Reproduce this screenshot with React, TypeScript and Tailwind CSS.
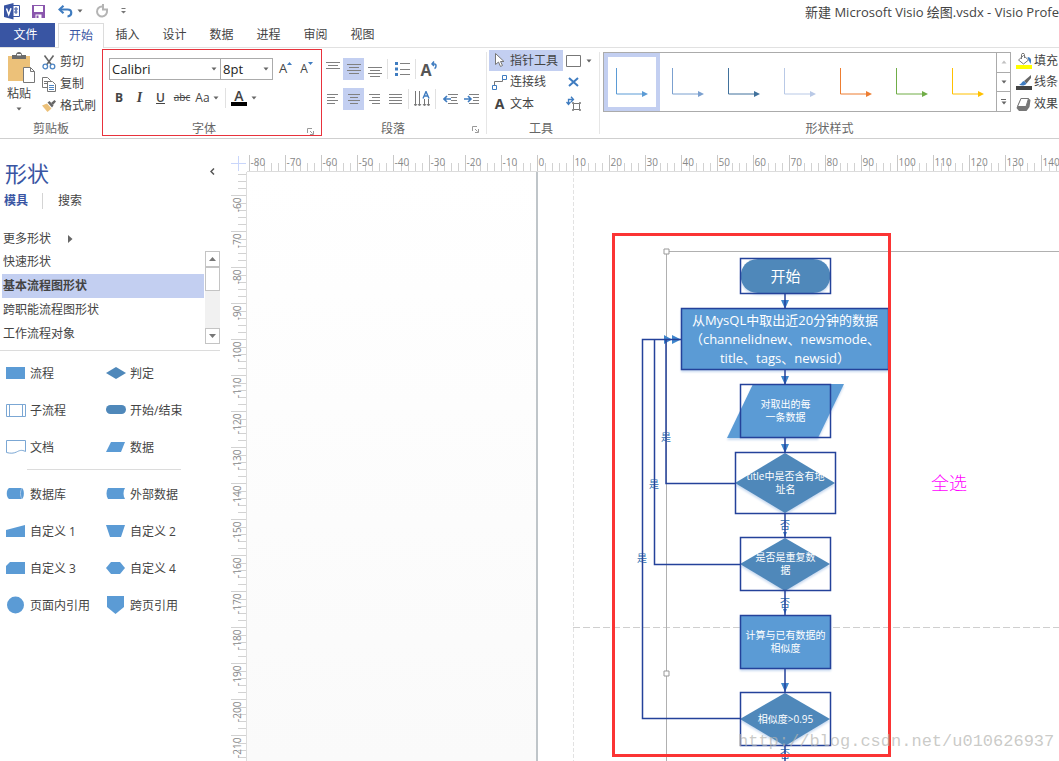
import type { ReactNode } from "react";

const FONT = "font-['Open_Sans','Noto_Sans_CJK_SC',sans-serif]";

// ─── Small shared pieces ─────────────────────────────────────────────────────
function Caret({ className = "" }: { className?: string }) {
  return (
    <svg width="6" height="4" viewBox="0 0 6 4" className={`shrink-0 ${className}`} fill="#666" aria-hidden>
      <path d="M0.5 0.5h5L3 3.5z" />
    </svg>
  );
}

function Sep() {
  return <span className="w-px h-5 bg-[#e1e1e1] shrink-0" />;
}

function IconButton({
  label,
  active,
  wide,
  children,
}: {
  label: string;
  active?: boolean;
  wide?: string;
  children: ReactNode;
}) {
  return (
    <button
      type="button"
      aria-label={label}
      className={`h-[22px] ${wide ?? "w-[21px]"} shrink-0 flex items-center justify-center ${active ? "bg-[#c3cff1]" : ""}`}
    >
      {children}
    </button>
  );
}

function Lines({ rows, y = 0 }: { rows: [number, number][]; y?: number }) {
  return (
    <svg width="14" height="22" fill="none" stroke="#808080" aria-hidden>
      {rows.map(([x1, x2], i) => (
        <path key={i} d={`M${x1} ${y + i * 3 + 0.5}H${x2}`} />
      ))}
    </svg>
  );
}

function Launcher() {
  return (
    <svg width="7" height="7" fill="none" stroke="#999" aria-hidden>
      <path d="M.5 5V.5H5M3 3l2.5 2.5M6.5 3v3.5H3" />
    </svg>
  );
}

// ─── Title bar ───────────────────────────────────────────────────────────────
function TitleBar() {
  return (
    <header className="h-[23px] flex items-center">
      <div className="flex items-center pl-1 pb-px">
        <svg width="17" height="17" aria-label="Visio" role="img">
          <path d="M8 2.5h7.5v11H8" fill="#fff" stroke="#3955a3" />
          <path d="M11 5h2v2h-2zM12 7v4M10 9h3.5" fill="none" stroke="#3955a3" />
          <path d="M0 2.5 9.500 0v16.500L0 14z" fill="#3955a3" />
          <path d="m2.500 5.500 2.200 6 2.300-6.300" fill="none" stroke="#fff" strokeWidth="1.500" />
        </svg>
        <button type="button" aria-label="保存" className="ml-[11px]">
          <svg width="13" height="13" className="block">
            <path d="M0 0h13v13H0z" fill="#8a56ad" />
            <path d="M2 1h9v6H2zM3.500 9.500h6V13h-6z" fill="#fff" />
            <path d="M4.500 10.500h2V13h-2z" fill="#8a56ad" />
          </svg>
        </button>
        <button type="button" aria-label="撤消" className="ml-[13px] flex items-center gap-1">
          <svg width="15" height="13" fill="none" stroke="#3f7cc0" strokeWidth="2.200">
            <path d="M2 4.500h7.500c5 0 5 6.500 0 7" />
            <path d="M5.500 0.800 1.500 4.500l4 3.700" />
          </svg>
          <Caret />
        </button>
        <button type="button" aria-label="重复" className="ml-3">
          <svg width="14" height="14" fill="none" stroke="#b4b4b4" strokeWidth="2" className="block">
            <path d="M7 2.500A5 5 0 1 0 12 7V5" />
            <path d="M8 0v5.500h5" />
          </svg>
        </button>
        <button type="button" aria-label="自定义快速访问工具栏" className="ml-[12px]">
          <svg width="5" height="6" fill="#777">
            <path d="M0.500 0h4v1h-4zM0 3h5L2.500 5.500z" />
          </svg>
        </button>
      </div>
      <div className="ml-auto text-[13px] leading-5 text-[#444] whitespace-nowrap">
        新建 Microsoft Visio 绘图.vsdx - Visio Profe
      </div>
    </header>
  );
}

const TABS = ["插入", "设计", "数据", "进程", "审阅", "视图"];

function TabBar() {
  return (
    <nav className="h-[25px] flex border-b border-[#e1e1e1] text-xs text-[#444]">
      <button type="button" className="w-[51px] box-content pr-1 bg-[#3955a3] text-white">文件</button>
      <button
        type="button"
        className="w-[46px] ml-[3px] -mb-px bg-white border border-b-0 border-[#dcdcdc] text-[#3955a3]"
      >
        开始
      </button>
      {TABS.map((t) => (
        <button key={t} type="button" className="w-[47px]">{t}</button>
      ))}
    </nav>
  );
}

// ─── Ribbon ──────────────────────────────────────────────────────────────────
function GroupLabel({ children, launcher }: { children: ReactNode; launcher?: boolean }) {
  return (
    <div className="mt-auto h-4 flex items-center text-xs leading-4 text-[#666]">
      <span className="flex-1 text-center">{children}</span>
      {launcher && <span className="w-[22px] pl-2"><Launcher /></span>}
    </div>
  );
}

function GroupEdge() {
  return <div className="w-px my-1 shrink-0 bg-[#e6e6e6]" />;
}

function Clipboard() {
  return (
    <section className="w-[102px] flex flex-col pb-px">
      <div className="flex pt-[3px]">
        <button type="button" className="w-[38px] mr-1 flex flex-col items-center text-xs text-[#444]">
          <svg width="28" height="33" className="mt-px ml-[6px]" aria-hidden>
            <path d="M0 4h22v25H0z" fill="#ecc179" />
            <path d="M4 7V3h4c0-4 6-4 6 0h4v4z" fill="#6b6b6b" />
            <path d="M9 3.500h4V2H9z" fill="#fff" />
            <path d="M15.500 15.500h7l4 4v11h-11z" fill="#fff" stroke="#777" />
            <path d="M22.500 15.500v4h4" fill="none" stroke="#777" />
          </svg>
          <span className="leading-4 mt-px">粘贴</span>
          <Caret className="mt-[5px]" />
        </button>
        <div className="text-xs text-[#444]">
          <button type="button" className="h-[22px] flex items-center gap-1">
            <svg width="14" height="15" fill="none" aria-hidden>
              <path d="M2.500 0.500 9.500 10M11.500 0.500 4.500 10" stroke="#666" strokeWidth="1.600" />
              <circle cx="3.300" cy="11.500" r="2.300" stroke="#4e86c4" strokeWidth="1.300" />
              <circle cx="10.500" cy="11.500" r="2.300" stroke="#4e86c4" strokeWidth="1.300" />
            </svg>
            剪切
          </button>
          <button type="button" className="h-[22px] flex items-center gap-1">
            <svg width="14" height="15" fill="#fff" stroke="#777" aria-hidden>
              <path d="M.500.500h5l3 3v7h-8zM2 4.500h4M2 6.500h4" />
              <path d="M5.500 4.500h5l3 3v7h-8z" />
              <path d="M7 8.500h5M7 10.500h5M7 12.500h5" stroke="#4e86c4" />
            </svg>
            复制
          </button>
          <button type="button" className="h-[22px] flex items-center gap-1">
            <svg width="14" height="12" aria-hidden>
              <path d="M0 5.500 5 3.500l4.500 5L5.500 12z" fill="#ecc179" />
              <path d="m5.500 2.500 2-1.500 4 4.500-1.500 2z" fill="#666" />
              <path d="m9 3 3.500-3L14 1.500 11 5z" fill="#666" />
            </svg>
            格式刷
          </button>
        </div>
      </div>
      <GroupLabel>剪贴板</GroupLabel>
    </section>
  );
}

function Combo({ label, value, width }: { label: string; value: string; width: string }) {
  return (
    <label className={`relative block ${width}`} aria-label={label}>
      <select
        aria-label={label}
        className="appearance-none block w-full h-[22px] pl-[2px] border border-[#ababab] bg-white text-[13px] leading-5 text-[#222]"
      >
        <option>{value}</option>
      </select>
      <Caret className="absolute right-1 top-[9px] pointer-events-none" />
    </label>
  );
}

function FontGroup() {
  return (
    <section className="w-[220px] mt-px mb-[2px] border border-[#e8323c] flex flex-col pl-[6px] text-[#444]">
      <div className="flex items-center pt-2">
        <Combo label="字体" value="Calibri" width="w-[112px]" />
        <Combo label="字号" value="8pt" width="w-[53px] -ml-px" />
        <IconButton label="增大字号">
          <span className="text-[13px] pl-1">A</span>
          <svg width="5" height="3" className="mb-3" fill="#3f7cc0"><path d="M0 3h5L2.500 0z" /></svg>
        </IconButton>
        <IconButton label="减小字号">
          <span className="text-xs pl-1">A</span>
          <svg width="5" height="3" className="mb-3" fill="#3f7cc0"><path d="M0 0h5L2.500 3z" /></svg>
        </IconButton>
      </div>
      <div className="flex items-center mt-[7px] text-xs">
        <IconButton label="加粗" wide="w-5"><b>B</b></IconButton>
        <IconButton label="倾斜">
          <i className="font-['Liberation_Serif',serif] text-sm font-bold">I</i>
        </IconButton>
        <IconButton label="下划线"><span className="underline font-semibold">U</span></IconButton>
        <IconButton label="删除线" wide="w-[22px]">
          <span className="line-through text-[10px]">abc</span>
        </IconButton>
        <IconButton label="更改大小写" wide="w-7">
          Aa<Caret className="ml-[3px]" />
        </IconButton>
        <span className="w-1" />
        <Sep />
        <IconButton label="字体颜色" wide="w-9">
          <span className="w-4 h-4 border-b-4 border-black text-sm leading-3 font-semibold">A</span>
          <Caret className="ml-1" />
        </IconButton>
      </div>
      <div className="mt-auto h-3 flex items-center text-xs leading-3 text-[#666]">
        <span className="flex-1 text-center">字体</span>
        <span className="w-[22px] pl-2 pt-1"><Launcher /></span>
      </div>
    </section>
  );
}

function ParagraphGroup() {
  return (
    <section className="w-[164px] flex flex-col pb-px">
      <div className="flex items-center pt-[10px]">
        <IconButton label="顶端对齐"><Lines rows={[[0, 14], [2, 12], [0, 14]]} y={4} /></IconButton>
        <IconButton label="中部对齐" active><Lines rows={[[0, 14], [2, 12], [0, 14], [2, 12]]} y={6} /></IconButton>
        <IconButton label="底端对齐"><Lines rows={[[0, 14], [2, 12], [0, 14], [2, 12]]} y={9} /></IconButton>
        <span className="w-[2px]" />
        <Sep />
        <span className="w-[3px]" />
        <IconButton label="项目符号">
          <svg width="16" height="14" aria-hidden>
            <path d="M1 0h3v3H1zM1 5.500h3v3H1zM1 11h3v3H1z" fill="#3f7cc0" />
            <path d="M6 1.500h10M6 7.500h10M6 12.500h10" stroke="#808080" />
          </svg>
        </IconButton>
        <span className="w-[3px]" />
        <Sep />
        <IconButton label="旋转文本" wide="w-[25px]">
          <span className="text-base leading-4 font-bold text-[#555] pt-[2px]">A</span>
          <svg width="6" height="9" fill="none" stroke="#3f7cc0" strokeWidth="1.500" className="mb-2 -ml-px">
            <path d="M1 3h2.500c2 0 2 3.500 0 4.500M3 .500 1 3l2 2" />
          </svg>
        </IconButton>
      </div>
      <div className="flex items-center mt-2">
        <IconButton label="左对齐"><Lines rows={[[1, 12], [1, 9], [1, 12], [1, 9]]} y={6} /></IconButton>
        <IconButton label="居中" active><Lines rows={[[1, 13], [3, 11], [1, 13], [3, 11]]} y={6} /></IconButton>
        <IconButton label="右对齐"><Lines rows={[[1, 12], [4, 12], [1, 12], [4, 12]]} y={6} /></IconButton>
        <IconButton label="两端对齐"><Lines rows={[[0, 13], [0, 13], [0, 13], [0, 13]]} y={6} /></IconButton>
        <span className="w-[2px]" />
        <Sep />
        <span className="w-[2px]" />
        <IconButton label="文字方向">
          <svg width="16" height="16" fill="none" aria-hidden>
            <path d="M1.500 0v14M5.500 0v14M10.500 8v6M14.500 8v6M0 13l1.500 2L3 13M4 13l1.500 2L7 13M9 13l1.500 2 1.500-2M13 13l1.500 2 1.500-2" stroke="#777" />
            <path d="m9 7.500 3-7 3 7M10 5h4" stroke="#3f7cc0" strokeWidth="1.400" />
          </svg>
        </IconButton>
        <span className="w-[3px]" />
        <Sep />
        <span className="w-1" />
        <IconButton label="减少缩进量">
          <svg width="15" height="10" fill="none" aria-hidden>
            <path d="M5 .500h10M8 3.500h6M8 6.500h6M5 9.500h10" stroke="#808080" />
            <path d="M1 5h7M4 2 1 5l3 3" stroke="#3f7cc0" strokeWidth="1.600" />
          </svg>
        </IconButton>
        <IconButton label="增加缩进量">
          <svg width="15" height="10" fill="none" aria-hidden>
            <path d="M5 .500h10M9 3.500h6M9 6.500h6M5 9.500h10" stroke="#808080" />
            <path d="M0 5h7M4 2l3 3-3 3" stroke="#3f7cc0" strokeWidth="1.600" />
          </svg>
        </IconButton>
      </div>
      <GroupLabel launcher>段落</GroupLabel>
    </section>
  );
}

function ToolGroup() {
  return (
    <section className="w-[112px] flex flex-col pb-px text-xs text-[#444]">
      <div className="flex pt-[2px] pl-[2px]">
        <div className="w-[74px]">
          <button type="button" className="w-full h-[21px] flex items-center bg-[#c3cff1]">
            <svg width="21" height="15" fill="#fff" stroke="#777" aria-hidden>
              <path d="M6.500.500v11l3-2.500 2 4.500 2-1-2-4h3.500z" />
            </svg>
            指针工具
          </button>
          <button type="button" className="h-[22px] flex items-center">
            <svg width="21" height="15" fill="none" aria-hidden>
              <path d="M5.500 10V6.500h8V4" stroke="#777" />
              <path d="M3.500 10.500h4v4h-4zM13.500.500h4v4h-4z" fill="#fff" stroke="#3f7cc0" />
            </svg>
            连接线
          </button>
          <button type="button" className="h-[22px] flex items-center">
            <span className="w-[21px] text-center text-sm font-bold">A</span>
            文本
          </button>
        </div>
        <div className="pl-[3px]">
          <button type="button" aria-label="矩形" className="h-[21px] flex items-center gap-[5px]">
            <svg width="15" height="12" fill="none" stroke="#777"><path d="M.500.500h14v11H.500z" /></svg>
            <Caret />
          </button>
          <button type="button" aria-label="连接点" className="w-[14px] h-[22px] flex items-center justify-center">
            <svg width="11" height="10" stroke="#3f7cc0" strokeWidth="2"><path d="m1 1 9 8M10 1 1 9" /></svg>
          </button>
          <button type="button" aria-label="文本块" className="h-[22px] flex items-center">
            <svg width="16" height="16" fill="none">
              <path d="M7.500 7.500h6v6h-6z" stroke="#777" />
              <path d="M6.500 6.500h1v1h-1zM13.500 6.500h1v1h-1zM6.500 13.500h1v1h-1zM13.500 13.500h1v1h-1z" fill="#fff" stroke="#777" />
              <path d="M2.500 8V3.500H7M5 .800l2.500 2.700L5 6M.500 6l2 2.500L4.500 6" stroke="#3f7cc0" strokeWidth="1.300" />
            </svg>
          </button>
        </div>
      </div>
      <div className="mt-auto h-4 text-xs leading-4 text-center text-[#666] pr-1">工具</div>
    </section>
  );
}

const STYLES = ["#5b9bd5", "#7ba0cf", "#41719c", "#b9c9e6", "#ed7d31", "#70ad47", "#ffc000"];

function StyleGroup() {
  return (
    <section className="flex-1 min-w-0 flex flex-col pb-px text-xs text-[#444]">
      <div className="flex pt-[2px] pl-[3px]">
        <div className="mt-[2px] h-[60px] flex shrink-0 border border-[#ababab]">
          {STYLES.map((c, i) => (
            <button
              key={c}
              type="button"
              aria-label={`形状样式 ${i + 1}`}
              className={`w-14 flex items-center justify-center ${i === 0 ? "border-4 border-[#c3cff1]" : ""}`}
            >
              <svg width="34" height="32" className="shrink-0">
                <path d="M1.500 2v26H29" fill="none" stroke={c} />
                <path d="M27 25v6l6-3z" fill={c} />
              </svg>
            </button>
          ))}
          <div className="w-[14px] flex flex-col border-l border-[#ababab]">
            <button type="button" aria-label="上一行" className="flex-1 flex items-center justify-center opacity-40">
              <Caret className="rotate-180" />
            </button>
            <button type="button" aria-label="下一行" className="flex-1 flex items-center justify-center border-y border-[#ababab]">
              <Caret />
            </button>
            <button type="button" aria-label="其他" className="flex-1 flex flex-col gap-px items-center justify-center">
              <span className="w-[5px] h-px bg-[#666]" />
              <Caret />
            </button>
          </div>
        </div>
        <div className="pl-[5px] shrink-0">
          <button type="button" className="h-[21px] flex items-center gap-[2px]">
            <svg width="16" height="16" aria-hidden>
              <path d="m2.500 7 5-4.500 5 4.500-5 4z" fill="#fff" stroke="#777" />
              <path d="M5.500 6V1.500c0-1.500 3-1.500 3 0V5" fill="none" stroke="#777" />
              <path d="M11.500 4c4 .500 4 3 3 7l-2-4z" fill="#3f7cc0" />
              <path d="M0 12h16v4H0z" fill="#ffff00" />
            </svg>
            填充
          </button>
          <button type="button" className="h-[22px] flex items-center gap-[2px]">
            <svg width="16" height="15" aria-hidden>
              <path d="M15 0 8 6l2.500 2.500L15 3z" fill="#666" />
              <path d="M8 6c-2 0-2 3-5 3.500 2 1.500 6 1.500 7.500-1z" fill="#3f7cc0" />
              <path d="M0 11h16v4H0z" fill="#444" />
            </svg>
            线条
          </button>
          <button type="button" className="h-[22px] flex items-center gap-[2px]">
            <svg width="16" height="13" aria-hidden>
              <path d="M5 0h7l2.500 2-1 7-3 4H3L.500 10z" fill="#777" />
              <path d="M5 .500h7.500L10 8.500H1.500z" fill="#fff" stroke="#777" />
            </svg>
            效果
          </button>
        </div>
      </div>
      <GroupLabel>形状样式</GroupLabel>
    </section>
  );
}

// ─── Shapes pane ─────────────────────────────────────────────────────────────
const STENCILS = ["快速形状", "基本流程图形状", "跨职能流程图形状", "工作流程对象"];

const B = "#5b9bd5";
const D = "#4f88ba";

const BASIC: [string, ReactNode][] = [
  ["流程", <path d="M0 3h19v12H0z" fill={B} />],
  ["判定", <path d="M0 9 10 3l10 6-10 6z" fill={D} />],
  ["子流程", <path d="M.500 3.500h19v12H.500zM3.500 3.500v12M16.500 3.500v12" fill="#fff" stroke="#7ba7d4" />],
  ["开始/结束", <rect x="0" y="4" width="20" height="9" rx="4.500" fill={D} />],
  ["文档", <path d="M.500 2.500h19v11c-4-2-6-1-9 .500s-6 1.500-10 .500z" fill="#fff" stroke="#7ba7d4" />],
  ["数据", <path d="M5 4h14l-4 10H0z" fill={B} />],
];

const EXTRA: [string, ReactNode][] = [
  ["数据库", <><path d="M3 3h13c2.500 2 2.500 9 0 11H3C0 12 0 5 3 3z" fill={B} /><path d="M16 3c-2 3-2 8 0 11" fill="none" stroke="#a9c8e8" /></>],
  ["外部数据", <path d="M2 3h17c-2 3-2 8 0 11H2C0 11 0 6 2 3z" fill={B} />],
  ["自定义 1", <path d="M0 8 19 3v12H0z" fill={B} />],
  ["自定义 2", <path d="M0 3h19l-4 12H4z" fill={B} />],
  ["自定义 3", <path d="M4 3h15v12H0V7z" fill={B} />],
  ["自定义 4", <path d="M5 3h9l5 6-5 6H5L0 9z" fill={B} />],
  ["页面内引用", <circle cx="9.500" cy="9" r="8.500" fill={B} />],
  ["跨页引用", <path d="M1 0h17v11L9.500 18 1 11z" fill={B} />],
];

function ShapeGrid({ items }: { items: [string, ReactNode][] }) {
  return (
    <div className="grid grid-cols-[100px_100px] auto-rows-[37px] pl-[6px]">
      {items.map(([name, shape]) => (
        <button key={name} type="button" className="flex items-center gap-1 whitespace-nowrap">
          <svg width="20" height="19" className="shrink-0" aria-hidden>{shape}</svg>
          {name}
        </button>
      ))}
    </div>
  );
}

function ShapesPane() {
  return (
    <aside className="w-[230px] shrink-0 pr-[10px] text-xs text-[#444]">
      <div className="flex items-center justify-between pt-[19px] pl-[5px] pr-[5px]">
        <h2 className="text-[22px] leading-[30px] text-[#3955a3]">形状</h2>
        <button type="button" aria-label="折叠" className="pb-1">
          <svg width="5" height="7" fill="none" stroke="#555" strokeWidth="1.500"><path d="M4 .500 1 3.500l3 3" /></svg>
        </button>
      </div>
      <div className="flex items-center h-6 pl-1 mt-px">
        <button type="button" className="font-bold text-[#3955a3]">模具</button>
        <span className="w-px h-4 bg-[#d4d4d4] ml-[14px] mr-[15px]" />
        <button type="button">搜索</button>
      </div>
      <button type="button" className="flex items-center h-6 mt-[14px] pl-[3px]">
        更多形状
        <svg width="5" height="8" fill="#666" className="ml-[17px]"><path d="M0 0l4.500 4L0 8z" /></svg>
      </button>
      <div className="flex h-[100px] border-b border-[#dcdcdc]">
        <ul className="flex-1 pl-[2px] -mt-px">
          {STENCILS.map((s, i) => (
            <li key={s}>
              <button
                type="button"
                className={`block w-full h-6 pl-px text-left ${i === 1 ? "bg-[#c3cff1] font-bold" : ""}`}
              >
                {s}
              </button>
            </li>
          ))}
        </ul>
        <div className="w-[15px] h-[93px] ml-px flex flex-col bg-[#f1f1f1]">
          <button type="button" aria-label="向上滚动" className="h-4 bg-white border border-[#c4c4c4] flex items-center justify-center">
            <svg width="7" height="4" fill="#777"><path d="M0 4h7L3.500 0z" /></svg>
          </button>
          <span className="h-6 bg-white border border-[#c4c4c4]" />
          <button type="button" aria-label="向下滚动" className="mt-auto h-4 bg-white border border-[#c4c4c4] flex items-center justify-center">
            <svg width="7" height="4" fill="#777"><path d="M0 0h7L3.500 4z" /></svg>
          </button>
        </div>
      </div>
      <div className="pt-1">
        <ShapeGrid items={BASIC} />
      </div>
      <div className="ml-[27px] w-[154px] h-px bg-[#dcdcdc] mt-[3px] mb-[6px]" />
      <ShapeGrid items={EXTRA} />
    </aside>
  );
}

// ─── Rulers ──────────────────────────────────────────────────────────────────
const MAJOR = 36;
const MINOR = [1, 2, 3, 4];

function TopRuler() {
  return (
    <svg className="w-full h-[17px] block" aria-hidden>
      {Array.from({ length: 23 }, (_, i) => {
        const x = 2.5 + i * MAJOR;
        return (
          <g key={i}>
            <path d={`M${x} 0V17`} stroke="#c8c8c8" />
            {MINOR.map((m) => (
              <path key={m} d={`M${Math.round(x + m * 7.2) + 0.5} 8V17`} stroke="#d2d2d2" />
            ))}
            <text x={x + 1} y="11" fontSize="10" fill="#888">{-80 + i * 10}</text>
          </g>
        );
      })}
      <path d="M0 16.5H4000" stroke="#dcdcdc" />
    </svg>
  );
}

function LeftRuler() {
  return (
    <svg className="w-[17px] h-full block" aria-hidden>
      {Array.from({ length: 17 }, (_, i) => {
        const y = -12.5 + i * MAJOR;
        return (
          <g key={i}>
            <path d={`M1 ${y}H17`} stroke="#d2d2d2" />
            {MINOR.map((m) => (
              <path key={m} d={`M8 ${Math.round(y + m * 7.2) + 0.5}H17`} stroke="#d2d2d2" />
            ))}
            {i > 0 && (
              <text transform={`translate(11 ${y + 2}) rotate(-90)`} textAnchor="end" fontSize="10" fill="#888">
                {-50 - i * 10}
              </text>
            )}
          </g>
        );
      })}
      <path d="M16.5 0V4000" stroke="#dcdcdc" />
    </svg>
  );
}

// ─── Drawing ─────────────────────────────────────────────────────────────────
type Node = {
  id: string;
  box: [number, number, number, number];
  shape: string;
  dark?: boolean;
  lines: string[];
  text: string;
};

const NODES: Node[] = [
  { id: "start", box: [493, 86, 91, 36], shape: "M511 87h55c23 0 23 34 0 34h-55c-23 0-23-34 0-34z", dark: true, lines: ["开始"], text: "text-[15px] leading-5" },
  { id: "fetch", box: [434, 136, 208, 62], shape: "M434 136h208v62H434z", lines: ["从MysQL中取出近20分钟的数据", "（channelidnew、newsmode、", "title、tags、newsid）"], text: "text-[13px] leading-[19px]" },
  { id: "each", box: [493, 212, 91, 54], shape: "M506 212h91l-26 54h-91z", lines: ["对取出的每", "一条数据"], text: "text-[10px] leading-[13px]" },
  { id: "title", box: [488, 280, 101, 62], shape: "M538 281l50 30-50 30-50-30z", dark: true, lines: ["title中是否含有地", "址名"], text: "text-[10px] leading-[13px]" },
  { id: "dup", box: [493, 365, 91, 54], shape: "M538 366l45 26-45 27-45-27z", dark: true, lines: ["是否是重复数", "据"], text: "text-[10px] leading-[13px]" },
  { id: "calc", box: [493, 443, 91, 54], shape: "M493 443h91v54h-91z", lines: ["计算与已有数据的", "相似度"], text: "text-[10px] leading-[13px]" },
  { id: "sim", box: [493, 520, 91, 54], shape: "M538 521l45 26-45 27-45-27z", dark: true, lines: ["相似度>0.95"], text: "text-[10px] leading-[13px]" },
];

const ANSWERS: [string, string, string][] = [
  ["a", "是", "left-[414px] top-[259px]"],
  ["b", "是", "left-[402px] top-[306px]"],
  ["c", "是", "left-[390px] top-[380px]"],
  ["d", "否", "left-[533px] top-[347px]"],
  ["e", "否", "left-[533px] top-[425px]"],
  ["f", "否", "left-[533px] top-[576px]"],
];

function Drawing() {
  return (
    <div className="relative overflow-hidden bg-linear-to-b from-white to-[#fafafa]">
      <div className="absolute left-[289px] top-0 right-0 bottom-0 bg-white border-l-2 border-[#bfc5c9]" />
      <svg className="absolute inset-0 w-full h-full" fill="none" aria-hidden>
        <path d="M326.500 0V4000" stroke="#e2e2e2" strokeDasharray="4 2" />
        <path d="M326 455.500H4000" stroke="#cfcfcf" strokeDasharray="7 3" />
        <g style={{ filter: "drop-shadow(0 2px 1px #c9daf0)" }}>
          {NODES.map((n) => (
            <path key={n.id} d={n.shape} fill={n.dark ? D : B} />
          ))}
        </g>
      </svg>

      {ANSWERS.map(([id, t, pos]) => (
        <span key={id} className={`absolute ${pos} text-[10px] leading-[13px] text-[#2f6fb2]`}>{t}</span>
      ))}
      {NODES.map((n) => (
        <div
          key={n.id}
          className={`absolute flex flex-col items-center justify-center whitespace-nowrap text-white ${n.text}`}
          style={{ left: n.box[0], top: n.box[1], width: n.box[2], height: n.box[3] }}
        >
          {n.lines.map((l) => (
            <span key={l}>{l}</span>
          ))}
        </div>
      ))}

      <svg className="absolute inset-0 w-full h-full" fill="none" aria-hidden>
        {/* selection bounds */}
        <path d="M419.500 4000V79.500H4000" stroke="#b0b0b0" />
        <path d="M417 77h5v5h-5zM417 499h5v5h-5z" fill="#fff" stroke="#999" />
        {/* arrow heads */}
        <path
          d="M534 128h8l-4 9zM534 204h8l-4 9zM534 272h8l-4 9zM536 360h4l-2 5zM536 437h4l-2 5zM534 511h8l-4 9zM417 163v9l8-4.500zM425 163v9l9-4.500z"
          fill="#3f86cc"
        />
        {/* connectors */}
        <path
          d="M538 122v14M538 198v14M538 266v14M538 342v23M538 419v24M538 497v23M538 574v60M488 311.500H419V167.500M493 392.500H407.500V167.500M493 546.500H395.500V167.500H434"
          stroke="#24429a"
          strokeWidth="1.500"
        />
        {NODES.map((n) => (
          <rect
            key={n.id}
            x={n.box[0] + 0.5}
            y={n.box[1] + 0.5}
            width={n.box[2] - 1}
            height={n.box[3] - 1}
            stroke="#24429a"
            strokeWidth="1.500"
          />
        ))}
      </svg>

      <span className="absolute left-[684px] top-[299px] text-lg leading-6 font-light text-[#ff00ff]">全选</span>
      <div className="absolute left-[365px] top-[61px] w-[279px] h-[524px] border-3 border-[#fb3434]" />
      <span className="absolute left-[491px] top-[558px] font-['Liberation_Mono',monospace] text-[17px] leading-6 text-[#b4b4b0]/70">
        http://blog.csdn.net/u010626937
      </span>
    </div>
  );
}

export default function App() {
  return (
    <div className={`h-screen flex flex-col overflow-hidden bg-white ${FONT}`}>
      <TitleBar />
      <TabBar />
      <div className="h-[91px] shrink-0 flex border-b border-[#cfcfcf]">
        <Clipboard />
        <FontGroup />
        <ParagraphGroup />
        <GroupEdge />
        <ToolGroup />
        <GroupEdge />
        <StyleGroup />
      </div>
      <div className="flex-1 min-h-0 flex">
        <ShapesPane />
        <main className="flex-1 min-w-0 pt-4 grid grid-cols-[17px_minmax(0,1fr)] grid-rows-[17px_minmax(0,1fr)]">
          <svg width="17" height="17" stroke="#c9d6fb" aria-hidden>
            <path d="M8.500 1v15M1 8.500h15" />
          </svg>
          <TopRuler />
          <LeftRuler />
          <Drawing />
        </main>
      </div>
    </div>
  );
}
